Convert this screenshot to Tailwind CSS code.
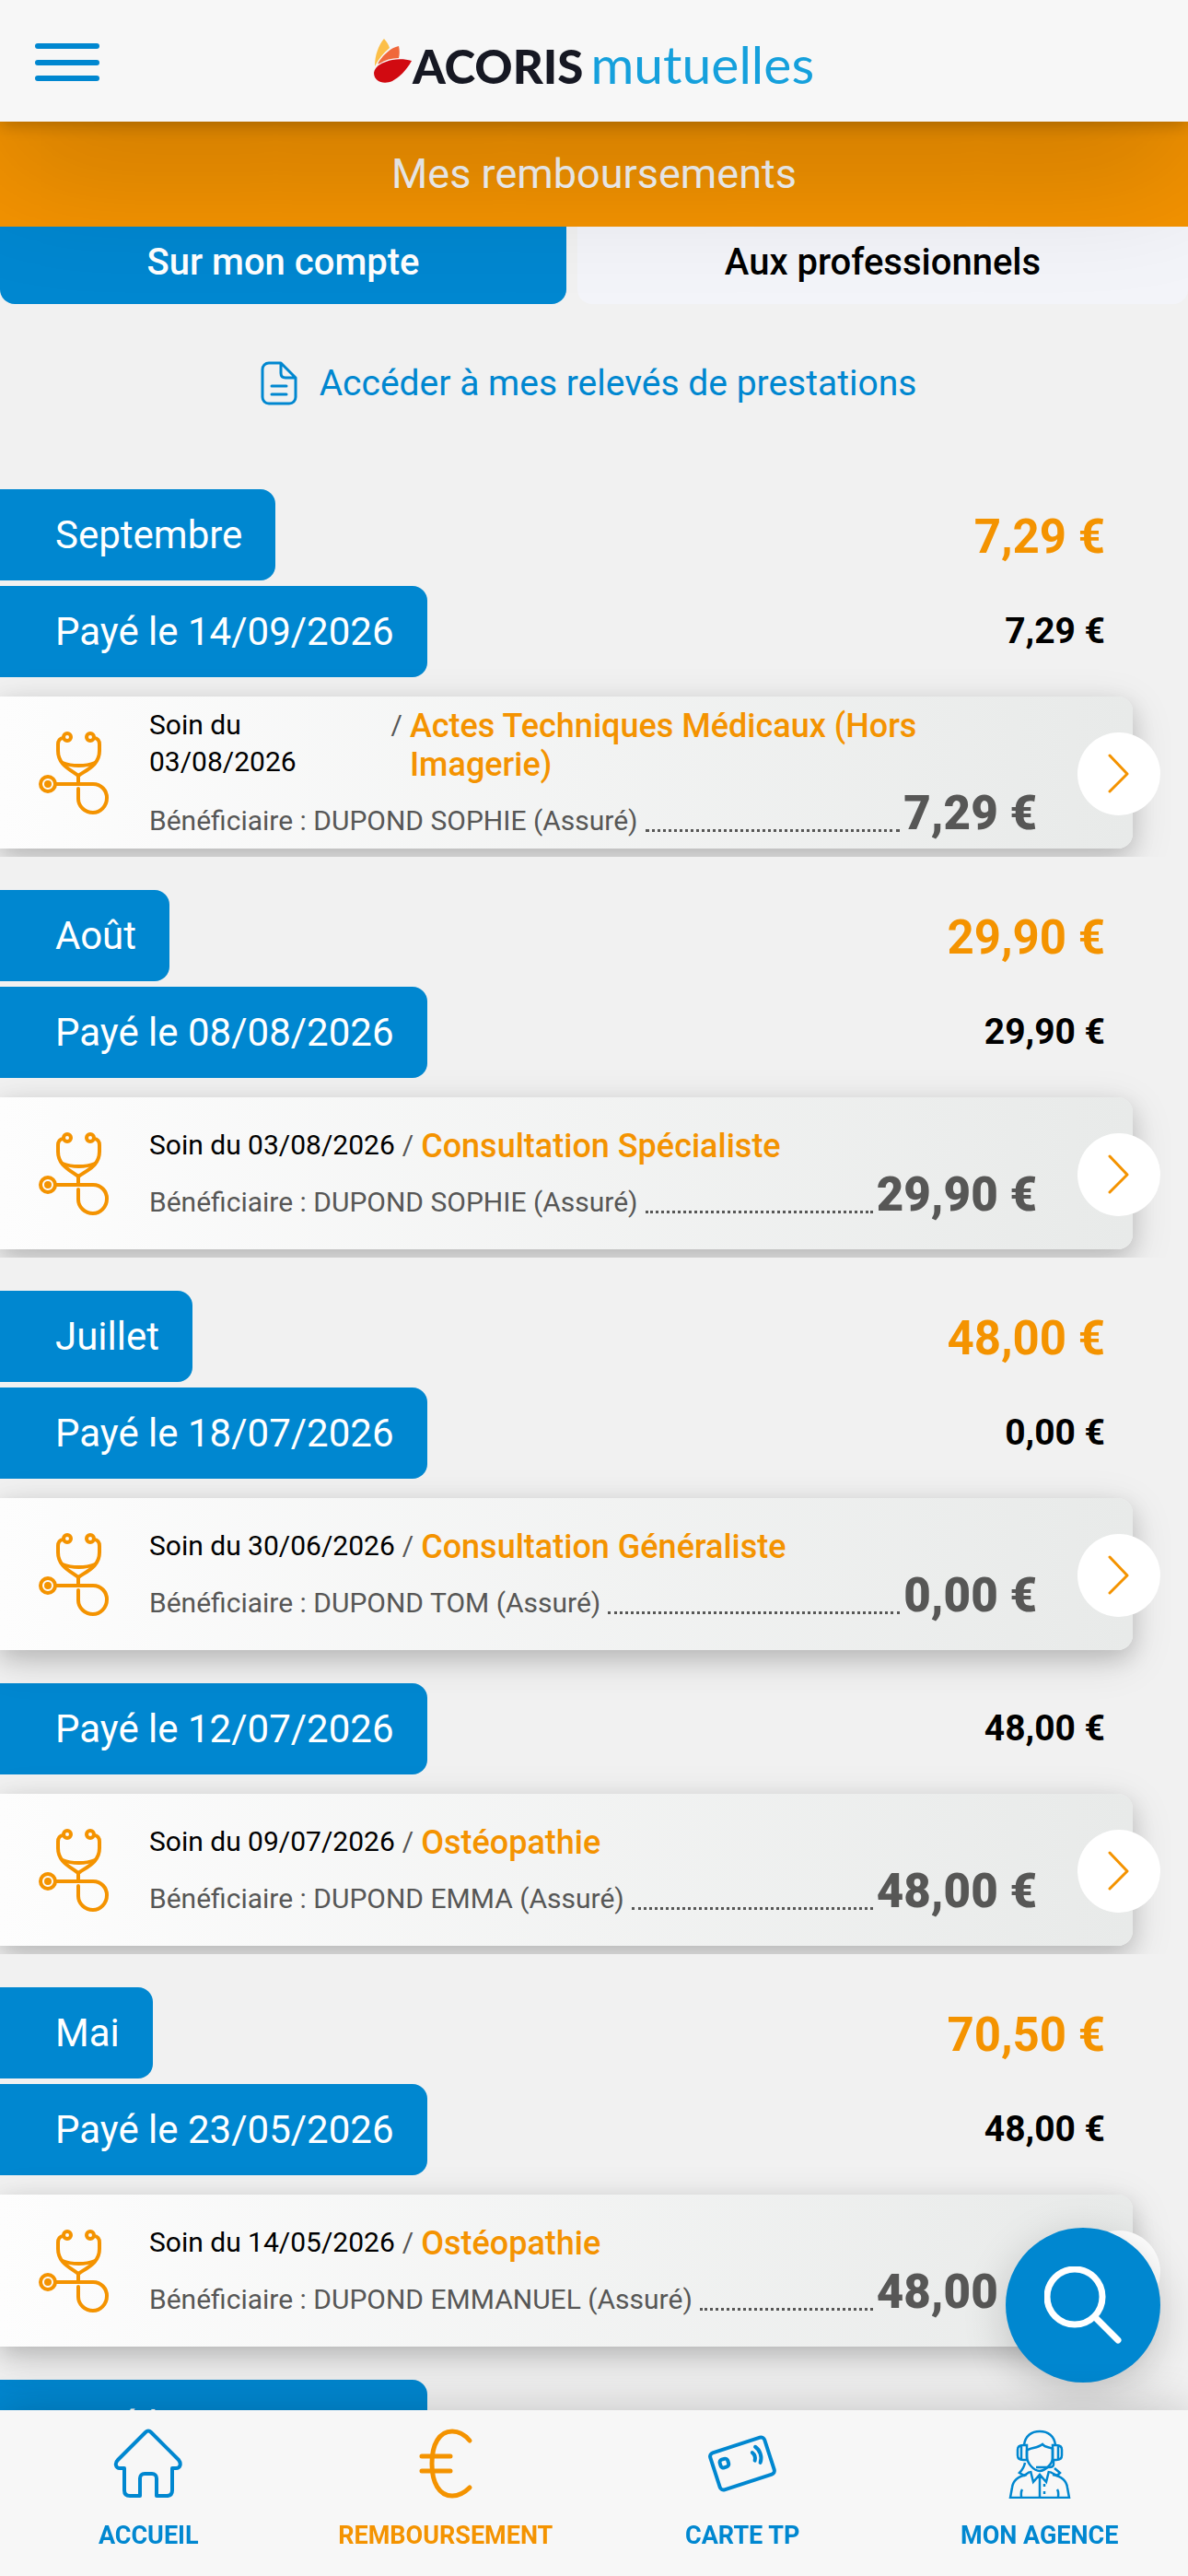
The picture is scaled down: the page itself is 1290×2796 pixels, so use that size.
<!DOCTYPE html>
<html lang="fr">

<head>
  <meta charset="UTF-8">
  <meta name="viewport" content="width=device-width, initial-scale=1.0">
  <title>Mes remboursements</title>
  <script src="https://cdn.jsdelivr.net/npm/@tailwindcss/browser@4"></script>
</head>

<body class="bg-[#f1f1f1] text-black font-['Roboto',sans-serif]">
  <!-- Icons -->
  <svg class="hidden">
    <symbol id="stethoscope" viewBox="0 0 76 90">
      <g fill="none" stroke="#f49300" stroke-width="4" stroke-linecap="round" stroke-linejoin="round">
        <circle cx="31" cy="6" r="4" />
        <circle cx="56" cy="6" r="4" />
        <path d="M27 7C23 7 21 10 21 14V21C21 36 34 41 43 48C53 41 66 36 66 21V14C66 10 64 7 60 7" />
        <path d="M26 34C36 38 51 38 61 34M43 48V57" />
        <path d="M19 57H59C68 57 74 64 74 72C74 81 67 88 59 88C50 88 43 81 43 73V62" />
        <circle cx="10" cy="57" r="8" />
        <circle cx="10" cy="57" r="2" />
      </g>
    </symbol>
    <symbol id="chevron" viewBox="0 0 24 44">
      <path d="M2 2L21 22L2 41" fill="none" stroke="#f49300" stroke-width="3" stroke-linecap="round" stroke-linejoin="round" />
    </symbol>
  </svg>

  <!-- Header -->
  <header class="fixed top-0 inset-x-0 z-20 h-33 bg-[#f7f7f7] shadow-[0_3px_18px_rgba(0,0,0,0.25),0_50px_140px_rgba(0,0,0,0.18)]">
    <div class="relative h-full flex items-center justify-center">
      <button type="button" aria-label="Menu" class="absolute left-9 top-11">
        <svg class="w-[74px] h-12" viewBox="0 0 74 48" stroke="#0087d0" stroke-width="6" stroke-linecap="round">
          <path d="M5 6H69M5 24H69M5 41H69" />
        </svg>
      </button>
      <a href="#accueil" class="flex items-center">
        <svg class="w-[42px] h-12" viewBox="0 0 42 48">
          <path d="M1 30C1 18 5 7 11 0C14 3 16 7 17 10C10 16 5 22 1 30Z" fill="#fcbf48" />
          <path d="M6 24C11 17 18 10 27 8C28 12 28 17 27 21C19 21 12 23 6 27C4 28 4 27 6 24Z" fill="#f0683b" />
          <path d="M0 37C1 29 11 25 20 23C27 22 34 22 41 24C35 35 27 42 20 46C11 50 0 47 0 37Z" fill="#d10a11" />
        </svg>
        <span class="pt-2 flex items-baseline gap-2 font-['Lato',sans-serif]">
          <span class="text-[51px] leading-12 font-black text-[#161823]">ACORIS</span>
          <span class="text-[57px] leading-12 text-[#15a0dc]">mutuelles</span>
        </span>
      </a>
    </div>
  </header>

  <main class="pt-33 h-screen overflow-hidden">
    <h1 class="h-[114px] flex items-center justify-center bg-[#f49300] text-[45px] text-[#f8f8f8]">Mes remboursements</h1>

    <!-- Tabs -->
    <div role="tablist" class="flex gap-3 h-21 text-[40px] font-medium">
      <button type="button" role="tab" aria-selected="true" class="w-[615px] pb-1.5 rounded-b-2xl bg-[#0087d0] text-white">Sur mon compte</button>
      <button type="button" role="tab" aria-selected="false" class="flex-1 pb-1.5 rounded-b-2xl bg-[#f3f4f9]">Aux professionnels</button>
    </div>

    <a href="#releves" class="mt-14 h-[60px] pr-3 flex items-center justify-center gap-6 text-[39px] text-[#0087d0]">
      <svg class="w-10 h-12" viewBox="0 0 40 48" fill="none" stroke="#0087d0" stroke-width="3" stroke-linecap="round" stroke-linejoin="round">
        <path d="M22 2H9C5 2 2 5 2 9V39C2 43 5 46 9 46H31C35 46 38 43 38 39V18L22 2V13C22 17 24 18 27 18H38M12 27H28M12 36H28" />
      </svg>
      Accéder à mes relevés de prestations
    </a>

    <!-- Months -->
    <div id="months" class="mt-[85px] flex flex-col gap-9"></div>
  </main>

  <button type="button" aria-label="Rechercher" class="fixed right-7.5 bottom-52.5 z-10 size-42 rounded-full bg-[#0087d0] flex items-center justify-center shadow-[0_12px_48px_rgba(0,0,0,0.18)]">
    <svg class="size-21" viewBox="0 0 84 84" fill="none" stroke="#fff" stroke-width="7" stroke-linecap="round">
      <circle cx="33" cy="33" r="30" />
      <path d="M55 55L80 80" />
    </svg>
  </button>

  <!-- Bottom navigation -->
  <nav class="fixed bottom-0 inset-x-0 z-20 h-45 pt-5 grid grid-cols-4 bg-[#f7f7f7] text-[#0087d0] text-[27px] leading-8 font-bold shadow-[0_0_48px_rgba(0,0,0,0.2)]">
    <a href="#accueil" class="flex flex-col items-center gap-6">
      <svg class="size-19" viewBox="0 0 76 76" fill="none" stroke="currentColor" stroke-width="4" stroke-linejoin="round">
        <path d="M35 4L5 34C1 38 3 43 7 43H12V67C12 71 14 73 18 73H29V54C29 51 31 49 34 49H42C45 49 47 51 47 54V73H58C62 73 64 71 64 67V43H68C73 43 74 38 71 34L41 4C39 2 37 2 35 4Z" />
      </svg>
      ACCUEIL
    </a>
    <a href="#remboursement" aria-current="page" class="flex flex-col items-center gap-6 text-[#f49300]">
      <svg class="size-19" viewBox="0 0 76 76" fill="none" stroke="currentColor" stroke-width="5" stroke-linecap="round">
        <path d="M64 13C59 7 52 3 45 3C31 3 23 17 23 38C23 59 31 73 45 73C52 73 59 69 64 64M12 30H43M12 46H43" />
      </svg>
      REMBOURSEMENT
    </a>
    <a href="#carte" class="flex flex-col items-center gap-6">
      <svg class="size-19" viewBox="0 0 76 76" fill="none" stroke="currentColor" stroke-width="4" stroke-linecap="round">
        <g transform="rotate(-18 38 38)">
          <rect x="7" y="17" width="62" height="42" rx="4" />
          <rect x="15" y="27" width="9" height="9" rx="3" />
          <path d="M52 30C54 33 54 36 52 39M57 25C61 30 61 38 57 43" />
        </g>
      </svg>
      CARTE TP
    </a>
    <a href="#agence" class="flex flex-col items-center gap-6">
      <svg class="size-19" viewBox="0 0 76 76" fill="none" stroke="currentColor" stroke-width="2.5">
        <path d="M21 18C22 8 29 3 38 3C47 3 54 8 55 18" />
        <path d="M20 18H24V34H20C16 34 14 32 14 29V23C14 20 16 18 20 18ZM18 19V33M56 18H52V34H56C60 34 62 32 62 29V23C62 20 60 18 56 18ZM58 19V33" />
        <path d="M24 24C27 20 35 22 41 17C44 21 49 20 52 22V32C52 38 44 46 38 46C32 46 24 38 24 30Z" />
        <path d="M53 34V39C53 41 51 42 48 42H34M22 37C21 42 19 45 16 48L21 51L27 47M54 43L60 48L57 51L49 47" />
        <path d="M24 50C14 52 9 56 8 64L6 75H70L68 64C67 56 62 52 52 50M28 46L31 58L38 50L45 58L48 46M38 52V75M19 66C17 69 18 72 18 75M57 66C59 69 58 72 58 75" />
        <path d="M43 60V63M43 68V71" />
      </svg>
      MON AGENCE
    </a>
  </nav>

  <script>
    var months = [
      { name: 'Septembre', total: '7,29', payments: [
        { date: '14/09/2026', total: '7,29', care: '03/08/2026', act: 'Actes Techniques Médicaux (Hors Imagerie)', who: 'DUPOND SOPHIE', amount: '7,29' }
      ] },
      { name: 'Août', total: '29,90', payments: [
        { date: '08/08/2026', total: '29,90', care: '03/08/2026', act: 'Consultation Spécialiste', who: 'DUPOND SOPHIE', amount: '29,90' }
      ] },
      { name: 'Juillet', total: '48,00', payments: [
        { date: '18/07/2026', total: '0,00', care: '30/06/2026', act: 'Consultation Généraliste', who: 'DUPOND TOM', amount: '0,00' },
        { date: '12/07/2026', total: '48,00', care: '09/07/2026', act: 'Ostéopathie', who: 'DUPOND EMMA', amount: '48,00' }
      ] },
      { name: 'Mai', total: '70,50', payments: [
        { date: '23/05/2026', total: '48,00', care: '14/05/2026', act: 'Ostéopathie', who: 'DUPOND EMMANUEL', amount: '48,00' },
        { date: '09/05/2026' }
      ] }
    ];

    function careHtml(p) {
      return `
          <article class="relative mt-[21px] mr-15 h-[165px] pl-10.5 pr-26 flex items-center rounded-r-2xl bg-linear-to-r from-[#fdfdfd] to-[#e8eae9] text-[#575756] text-[30px] leading-10 shadow-[0_9px_24px_rgba(0,0,0,0.16),0_12px_48px_rgba(0,0,0,0.12)]">
            <svg class="w-[76px] h-[90px] mr-11 shrink-0"><use href="#stethoscope" /></svg>
            <div class="flex-1">
              <div class="flex gap-2">
                <span class="text-black">Soin du ${p.care}</span>
                <span>/</span>
                <h4 class="text-4xl leading-[42px] font-medium text-[#f49300]">${p.act}</h4>
              </div>
              <div class="mt-1 flex items-end gap-1">
                <span>Bénéficiaire : ${p.who} (Assuré)</span>
                <span class="flex-1 ml-1 mb-2 border-b-3 border-dotted border-[#575756]"></span>
                <strong class="text-[51px] leading-14 font-black">${p.amount} €</strong>
              </div>
            </div>
            <button type="button" aria-label="Détail" class="absolute -right-7.5 top-[39px] size-22.5 rounded-full bg-white flex items-center justify-center">
              <svg class="w-6 h-11"><use href="#chevron" /></svg>
            </button>
          </article>`;
    }

    function paymentHtml(p) {
      return `
        <div>
          <div class="flex items-center justify-between pr-22.5">
            <h3 class="h-[99px] pl-15 pr-9 flex items-center rounded-r-2xl bg-[#0087d0] text-[42px] text-white">Payé le ${p.date}</h3>
            ${p.total ? `<p class="text-[39px] font-bold">${p.total} €</p>` : ''}
          </div>
          ${p.care ? careHtml(p) : ''}
        </div>`;
    }

    document.getElementById('months').innerHTML = months.map(m => `
      <section class="overflow-hidden pb-[9px]">
        <div class="flex items-center justify-between pr-22.5 mb-1.5">
          <h2 class="h-[99px] pl-15 pr-9 flex items-center rounded-r-2xl bg-[#0087d0] text-[42px] text-white">${m.name}</h2>
          <p class="pt-1.5 text-[51px] font-bold text-[#f49300]">${m.total} €</p>
        </div>
        <div class="flex flex-col gap-9">${m.payments.map(paymentHtml).join('')}</div>
      </section>`).join('');
  </script>
</body>

</html>
